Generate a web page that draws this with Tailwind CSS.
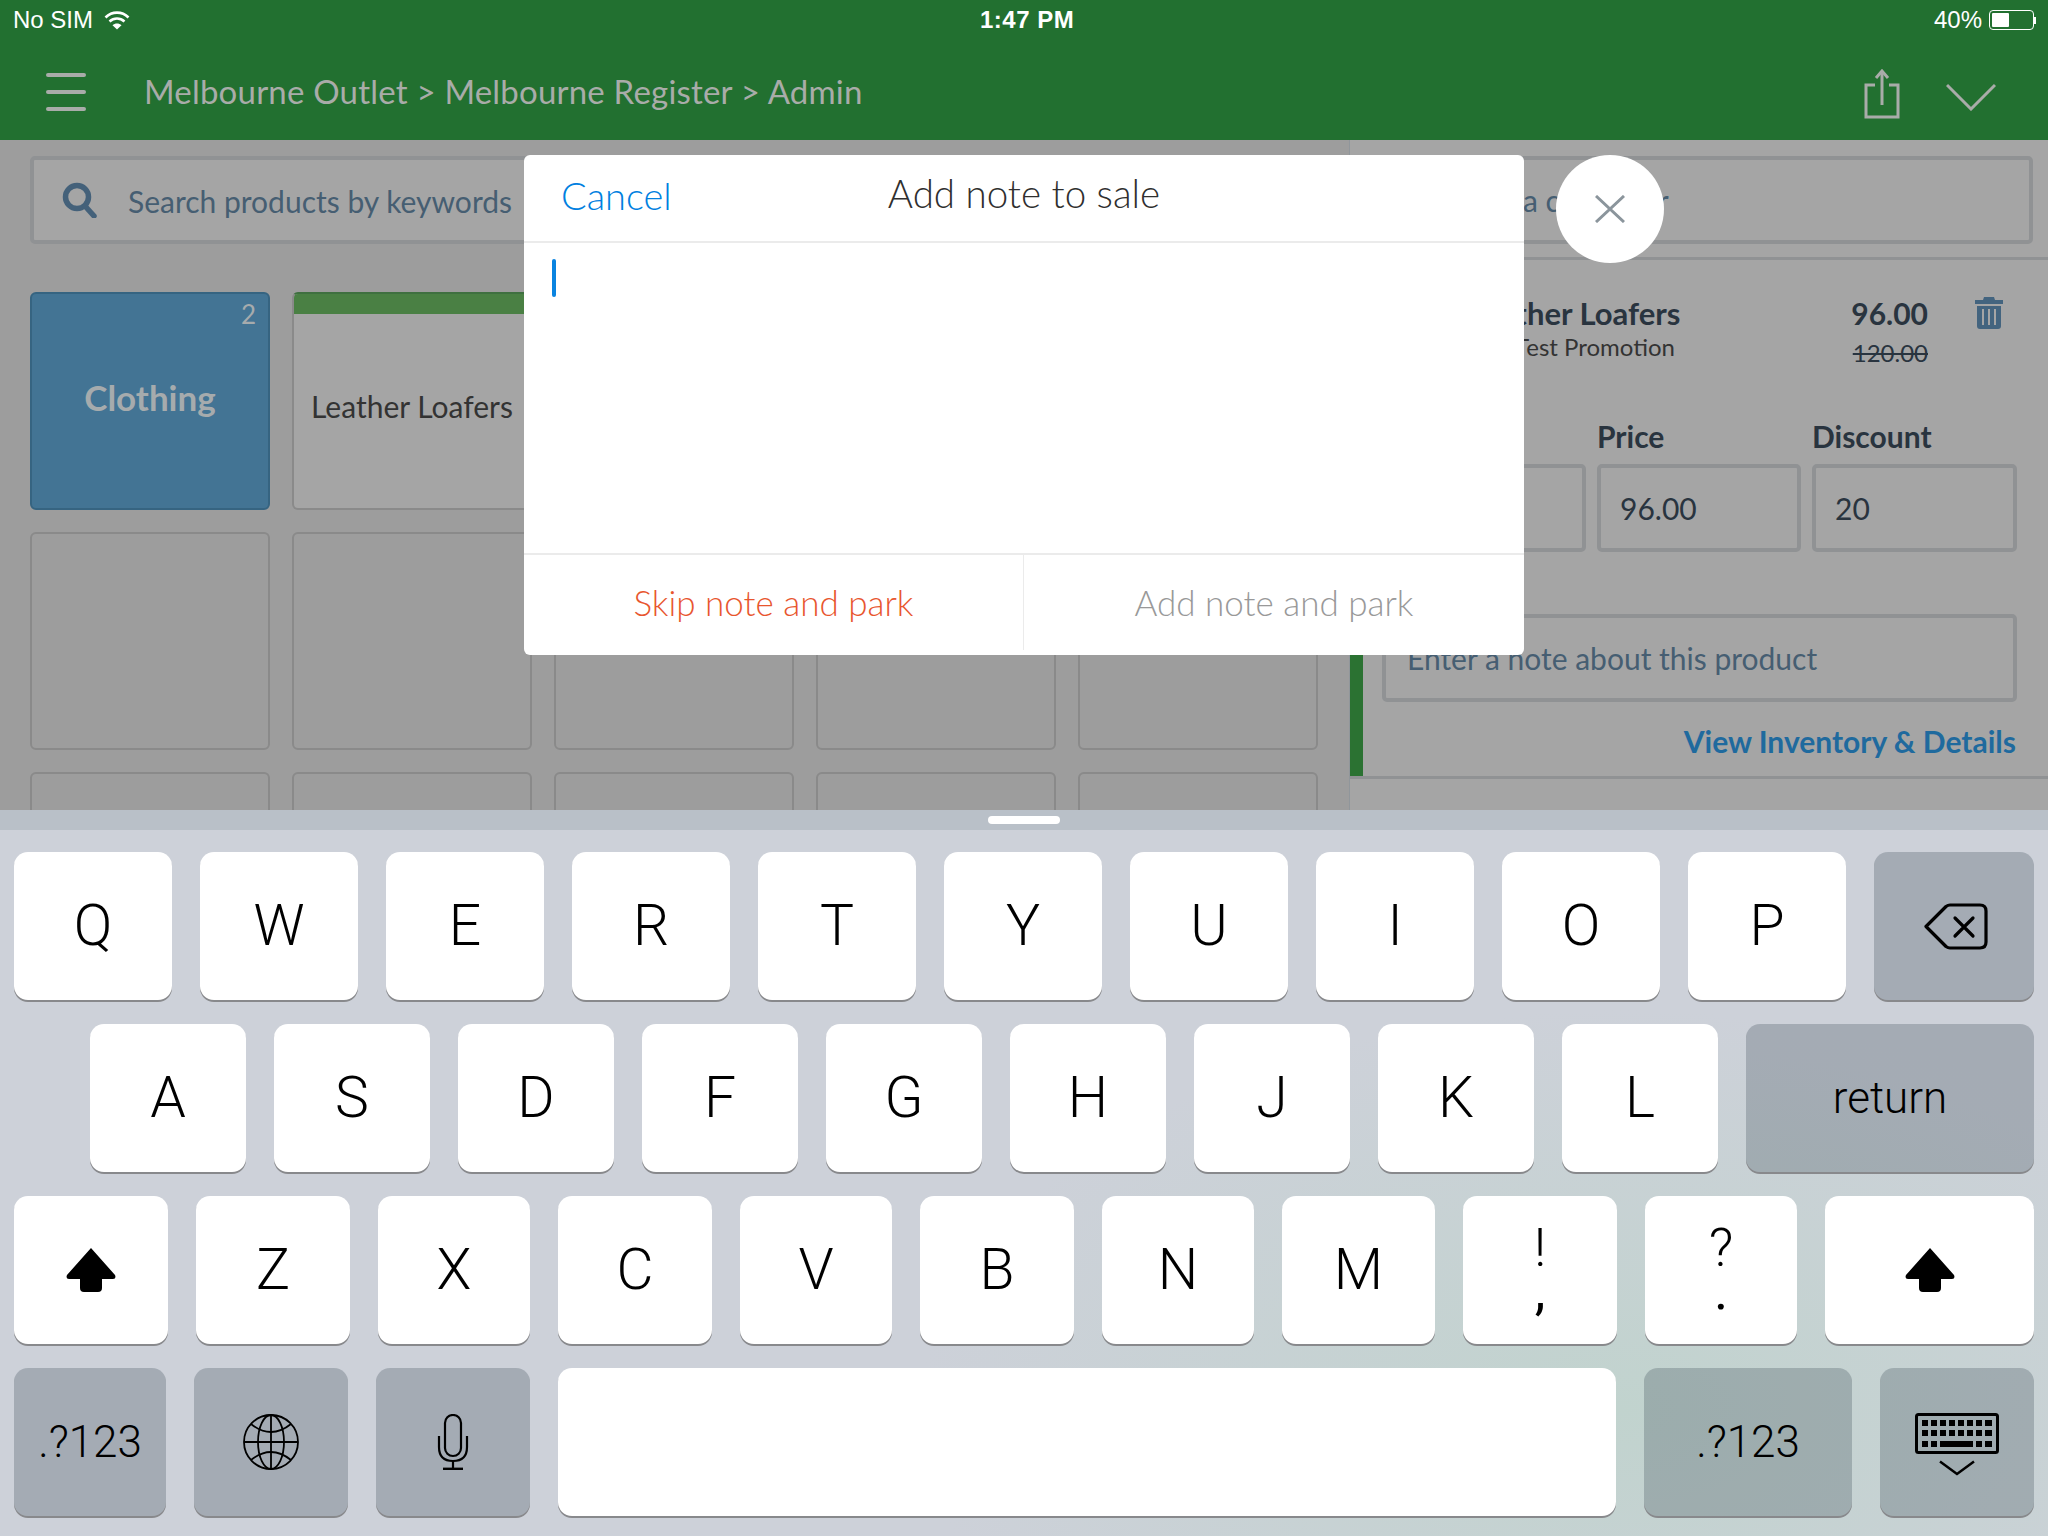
<!DOCTYPE html>
<html lang="en">
  <head>
    <meta charset="UTF-8" />
    <title>Add note to sale</title>
    <script src="https://cdn.jsdelivr.net/npm/@tailwindcss/browser@4"></script>
  </head>
  <body class="relative w-[2048px] h-[1536px] overflow-hidden bg-white font-[Lato,sans-serif]">
    <!-- green header with the ios status bar -->
    <header class="h-[140px] bg-[#227030]">
      <div class="relative flex h-[40px] items-center justify-between pl-[13px] pr-[12px] text-[24px] text-white font-['Liberation_Sans',sans-serif]">
        <div class="flex items-center gap-[11px]">
          <span>No SIM</span>
          <svg width="26" height="20" viewBox="0 0 26 20" fill="none" stroke="#fff" stroke-width="2.6">
            <path d="M1.5 7.5C8 1 18 1 24.5 7.5" />
            <path d="M5.5 11.5C10 7.5 16 7.5 20.5 11.5" />
            <path d="M13 19.5L8.5 15.2C11 12.8 15 12.8 17.5 15.2Z" fill="#fff" stroke="none" />
          </svg>
        </div>
        <span class="absolute left-[980px] font-bold tracking-[0.5px]">1:47 PM</span>
        <div class="flex items-center gap-[7px]">
          <span>40%</span>
          <div class="flex items-center">
            <div class="w-[45px] h-[20px] rounded-[4px] border border-white p-[2px]">
              <div class="w-[17px] h-full bg-white rounded-[1px]"></div>
            </div>
            <div class="w-[2px] h-[7px] bg-white"></div>
          </div>
        </div>
      </div>
      <div class="flex h-[100px] items-center pt-[4px] pl-[46px] pr-[52px] text-[#a9aca9]">
        <div class="flex w-[40px] flex-col gap-[13px]">
          <div class="h-[4px] rounded-full bg-[#a9aca9]"></div>
          <div class="h-[4px] rounded-full bg-[#a9aca9]"></div>
          <div class="h-[4px] rounded-full bg-[#a9aca9]"></div>
        </div>
        <div class="ml-[58px] text-[33px] tracking-[0.2px]">Melbourne Outlet &gt; Melbourne Register &gt; Admin</div>
        <svg class="ml-auto mt-[3px]" width="36" height="50" viewBox="0 0 36 50" fill="none" stroke="#a9aca9" stroke-width="3">
          <path d="M11 16H2V48H34V16H25" />
          <path d="M18 36V3" />
          <path d="M12 9L18 2L24 9" />
        </svg>
        <svg class="ml-[46px] mt-[10px]" width="50" height="28" viewBox="0 0 50 28" fill="none" stroke="#a9aca9" stroke-width="3">
          <path d="M1 2L25 26L49 2" />
        </svg>
      </div>
    </header>

    <main class="flex h-[670px]">
      <!-- product side, dimmed -->
      <section class="w-[1349px] shrink-0 overflow-hidden bg-[#9d9d9d] pl-[30px] pr-[31px] pt-[16px]">
        <div class="flex h-[88px] items-center rounded-[5px] border-4 border-[#909294] bg-[#a5a5a5] pl-[28px]">
          <svg width="36" height="36" viewBox="0 0 36 36" fill="none" stroke="#44617a" stroke-width="5.5">
            <circle cx="15" cy="15" r="11.5" />
            <path d="M23 24L32 34" stroke-linecap="round" />
          </svg>
          <span class="ml-[30px] mt-[2px] text-[30px] text-[#465e72]">Search products by keywords</span>
        </div>
        <div class="mt-[48px] grid grid-cols-[repeat(5,240px)] auto-rows-[218px] gap-x-[22px] gap-y-[22px]">
          <div class="relative flex items-center justify-center rounded-[6px] border-2 border-[#366481] bg-[#437494] pb-[8px] text-[35px] font-bold text-[#a6abad]">
            <span class="absolute right-[12px] top-[1px] text-[26px] font-normal">2</span>
            Clothing
          </div>
          <div class="flex flex-col overflow-hidden rounded-[6px] border-2 border-[#8a8a8a] border-t-[#3f7040] bg-[#a5a5a5]">
            <div class="h-[20px] bg-[#4a8044]"></div>
            <div class="flex flex-1 items-center justify-center pb-[9px] text-[30px] text-[#333]">Leather Loafers</div>
          </div>
          <div class="rounded-[6px] border-2 border-[#8a8a8a]"></div>
          <div class="rounded-[6px] border-2 border-[#8a8a8a]"></div>
          <div class="rounded-[6px] border-2 border-[#8a8a8a]"></div>
          <div class="rounded-[6px] border-2 border-[#8a8a8a]"></div>
          <div class="rounded-[6px] border-2 border-[#8a8a8a]"></div>
          <div class="rounded-[6px] border-2 border-[#8a8a8a]"></div>
          <div class="rounded-[6px] border-2 border-[#8a8a8a]"></div>
          <div class="rounded-[6px] border-2 border-[#8a8a8a]"></div>
          <div class="rounded-[6px] border-2 border-[#8a8a8a]"></div>
          <div class="rounded-[6px] border-2 border-[#8a8a8a]"></div>
          <div class="rounded-[6px] border-2 border-[#8a8a8a]"></div>
          <div class="rounded-[6px] border-2 border-[#8a8a8a]"></div>
          <div class="rounded-[6px] border-2 border-[#8a8a8a]"></div>
        </div>
      </section>

      <!-- sale side, dimmed -->
      <section class="flex flex-1 flex-col border-l border-[#90969b] bg-[#a5a5a5]">
        <div class="h-[120px] border-b-[3px] border-[#909294] px-[16px] pt-[16px]">
          <div class="flex h-[88px] items-center rounded-[5px] border-4 border-[#909294] pl-[12px] text-[30px] text-[#465e72]">Search for a customer</div>
        </div>
        <div class="h-[519px] border-b-[3px] border-[#909294]">
          <div class="h-[516px] border-l-[13px] border-[#2b7232] pl-[19px] pr-[32px]">
            <div class="flex pt-[35px] text-[#29343f]">
              <div class="w-[86px] shrink-0"></div>
              <div class="w-[232px]">
                <div class="text-[31px] font-bold leading-[36px]">Leather Loafers</div>
                <div class="ml-[47px] whitespace-nowrap text-[24px] leading-[32px] text-[#333]">Test Promotion</div>
              </div>
              <div class="ml-auto w-[120px] text-right">
                <div class="text-[30px] font-bold leading-[36px]">96.00</div>
                <div class="mt-[6px] text-[24px] leading-[32px] line-through">120.00</div>
              </div>
              <svg class="ml-[46px] mr-[13px] mt-[2px]" width="30" height="32" viewBox="0 0 30 32" fill="#43647f">
                <path d="M10 0H20L21 3H29V7H1V3H9Z" />
                <path d="M3 9H27V29Q27 32 24 32H6Q3 32 3 29ZM8 12V28H10V12ZM14 12V28H16V12ZM20 12V28H22V12Z" fill-rule="evenodd" />
              </svg>
            </div>
            <div class="mt-[47px] flex gap-[11px] text-[#29343f]">
              <div class="w-[204px] shrink-0">
                <div class="h-[40px] text-[30px] font-bold leading-[40px]">Quantity</div>
                <div class="mt-[8px] h-[88px] rounded-[5px] border-4 border-[#909294]"></div>
              </div>
              <div class="w-[204px] shrink-0">
                <div class="h-[40px] text-[30px] font-bold leading-[40px]">Price</div>
                <div class="mt-[8px] flex h-[88px] items-center rounded-[5px] border-4 border-[#909294] pl-[19px] text-[30px]">96.00</div>
              </div>
              <div class="w-[205px] shrink-0">
                <div class="h-[40px] text-[30px] font-bold leading-[40px]">Discount</div>
                <div class="mt-[8px] flex h-[88px] items-center rounded-[5px] border-4 border-[#909294] pl-[19px] text-[30px]">20</div>
              </div>
            </div>
            <div class="mt-[62px] flex h-[88px] items-center rounded-[5px] border-4 border-[#909294] pl-[21px] text-[30px] text-[#465e72]">Enter a note about this product</div>
            <div class="mt-[19px] pr-[1px] text-right text-[30px] font-bold leading-[40px] text-[#1f6a9e]">View Inventory &amp; Details</div>
          </div>
        </div>
      </section>
    </main>

    <!-- keyboard -->
    <div class="relative h-[726px] font-[Roboto,sans-serif] text-black">
      <div class="flex h-[20px] items-center justify-center bg-[#b9c0c8]">
        <div class="h-[8px] w-[72px] rounded-full bg-white"></div>
      </div>
      <div class="flex h-[706px] flex-col gap-[24px] bg-[#cdd0d9] bg-[radial-gradient(ellipse_700px_400px_at_1620px_580px,#c1d3ce,#cdd1d9)] pt-[22px] text-[57px] font-light">
        <div class="flex h-[148px] gap-[28px] pl-[14px]">
          <div class="flex w-[158px] items-center justify-center rounded-[14px] bg-white shadow-[0_2px_0_#88898c]">Q</div>
          <div class="flex w-[158px] items-center justify-center rounded-[14px] bg-white shadow-[0_2px_0_#88898c]">W</div>
          <div class="flex w-[158px] items-center justify-center rounded-[14px] bg-white shadow-[0_2px_0_#88898c]">E</div>
          <div class="flex w-[158px] items-center justify-center rounded-[14px] bg-white shadow-[0_2px_0_#88898c]">R</div>
          <div class="flex w-[158px] items-center justify-center rounded-[14px] bg-white shadow-[0_2px_0_#88898c]">T</div>
          <div class="flex w-[158px] items-center justify-center rounded-[14px] bg-white shadow-[0_2px_0_#88898c]">Y</div>
          <div class="flex w-[158px] items-center justify-center rounded-[14px] bg-white shadow-[0_2px_0_#88898c]">U</div>
          <div class="flex w-[158px] items-center justify-center rounded-[14px] bg-white shadow-[0_2px_0_#88898c]">I</div>
          <div class="flex w-[158px] items-center justify-center rounded-[14px] bg-white shadow-[0_2px_0_#88898c]">O</div>
          <div class="flex w-[158px] items-center justify-center rounded-[14px] bg-white shadow-[0_2px_0_#88898c]">P</div>
          <div class="flex w-[160px] items-center justify-center rounded-[14px] bg-[#2d3c49]/25 shadow-[0_2px_0_#88898c]">
            <svg class="ml-[4px]" width="64" height="47" viewBox="0 0 64 47" fill="none" stroke="#000" stroke-width="3.2" stroke-linejoin="round" stroke-linecap="round">
              <path d="M2 23.5L22 3.5Q24 2 26 2H56Q62 2 62 8V39Q62 45 56 45H26Q24 45 22 43.5Z" />
              <path d="M31 15L49 33M49 15L31 33" />
            </svg>
          </div>
        </div>
        <div class="flex h-[148px] gap-[28px] pl-[90px]">
          <div class="flex w-[156px] items-center justify-center rounded-[14px] bg-white shadow-[0_2px_0_#88898c]">A</div>
          <div class="flex w-[156px] items-center justify-center rounded-[14px] bg-white shadow-[0_2px_0_#88898c]">S</div>
          <div class="flex w-[156px] items-center justify-center rounded-[14px] bg-white shadow-[0_2px_0_#88898c]">D</div>
          <div class="flex w-[156px] items-center justify-center rounded-[14px] bg-white shadow-[0_2px_0_#88898c]">F</div>
          <div class="flex w-[156px] items-center justify-center rounded-[14px] bg-white shadow-[0_2px_0_#88898c]">G</div>
          <div class="flex w-[156px] items-center justify-center rounded-[14px] bg-white shadow-[0_2px_0_#88898c]">H</div>
          <div class="flex w-[156px] items-center justify-center rounded-[14px] bg-white shadow-[0_2px_0_#88898c]">J</div>
          <div class="flex w-[156px] items-center justify-center rounded-[14px] bg-white shadow-[0_2px_0_#88898c]">K</div>
          <div class="flex w-[156px] items-center justify-center rounded-[14px] bg-white shadow-[0_2px_0_#88898c]">L</div>
          <div class="flex w-[288px] items-center justify-center rounded-[14px] bg-[#2d3c49]/25 text-[44px] shadow-[0_2px_0_#88898c]">return</div>
        </div>
        <div class="flex h-[148px] gap-[28px] pl-[14px]">
          <div class="flex w-[154px] items-center justify-center rounded-[14px] bg-white shadow-[0_2px_0_#88898c]">
            <svg width="50" height="44" viewBox="0 0 50 44" fill="#000">
              <path d="M25 0L49 27Q50.500 31 47 31H36V40Q36 44 32 44H18Q14 44 14 40V31H3Q-.5 31 1 27Z" />
            </svg>
          </div>
          <div class="flex w-[154px] items-center justify-center rounded-[14px] bg-white shadow-[0_2px_0_#88898c]">Z</div>
          <div class="flex w-[152px] items-center justify-center rounded-[14px] bg-white shadow-[0_2px_0_#88898c]">X</div>
          <div class="flex w-[154px] items-center justify-center rounded-[14px] bg-white shadow-[0_2px_0_#88898c]">C</div>
          <div class="flex w-[152px] items-center justify-center rounded-[14px] bg-white shadow-[0_2px_0_#88898c]">V</div>
          <div class="flex w-[154px] items-center justify-center rounded-[14px] bg-white shadow-[0_2px_0_#88898c]">B</div>
          <div class="flex w-[152px] items-center justify-center rounded-[14px] bg-white shadow-[0_2px_0_#88898c]">N</div>
          <div class="flex w-[153px] items-center justify-center rounded-[14px] bg-white shadow-[0_2px_0_#88898c]">M</div>
          <div class="flex w-[154px] flex-col items-center justify-center rounded-[14px] bg-white pb-[2px] text-[54px] leading-[43px] shadow-[0_2px_0_#88898c]"><span>!</span><span class="font-normal">,</span></div>
          <div class="flex w-[152px] flex-col items-center justify-center rounded-[14px] bg-white pb-[2px] text-[54px] leading-[43px] shadow-[0_2px_0_#88898c]"><span>?</span><span class="font-normal">.</span></div>
          <div class="flex w-[209px] items-center justify-center rounded-[14px] bg-white shadow-[0_2px_0_#88898c]">
            <svg width="50" height="44" viewBox="0 0 50 44" fill="#000">
              <path d="M25 0L49 27Q50.500 31 47 31H36V40Q36 44 32 44H18Q14 44 14 40V31H3Q-.5 31 1 27Z" />
            </svg>
          </div>
        </div>
        <div class="flex h-[148px] gap-[28px] pl-[14px] text-[44px]">
          <div class="flex w-[152px] items-center justify-center rounded-[14px] bg-[#2d3c49]/25 shadow-[0_2px_0_#88898c]">.?123</div>
          <div class="flex w-[154px] items-center justify-center rounded-[14px] bg-[#2d3c49]/25 shadow-[0_2px_0_#88898c]">
            <svg width="56" height="56" viewBox="0 0 56 56" fill="none" stroke="#000" stroke-width="1.800">
              <circle cx="28" cy="28" r="27" />
              <ellipse cx="28" cy="28" rx="13" ry="27" />
              <path d="M28 1V55M1 28H55" />
              <path d="M8 10Q28 26 48 10M8 46Q28 30 48 46" />
            </svg>
          </div>
          <div class="flex w-[154px] items-center justify-center rounded-[14px] bg-[#2d3c49]/25 shadow-[0_2px_0_#88898c]">
            <svg width="32" height="56" viewBox="0 0 32 56" fill="none" stroke="#000" stroke-width="2.200">
              <rect x="8" y="1" width="16" height="41" rx="8" />
              <path d="M2 22V33Q2 47 16 47Q30 47 30 33V22" />
              <path d="M16 47V55" />
              <path d="M6 55H26" stroke-width="2.800" />
            </svg>
          </div>
          <div class="w-[1058px] rounded-[14px] bg-white shadow-[0_2px_0_#88898c]"></div>
          <div class="flex w-[208px] items-center justify-center rounded-[14px] bg-[#2d3c49]/25 shadow-[0_2px_0_#88898c]">.?123</div>
          <div class="flex w-[154px] flex-col items-center justify-center gap-[6px] rounded-[14px] bg-[#2d3c49]/25 pt-[4px] shadow-[0_2px_0_#88898c]">
            <svg width="84" height="41" viewBox="0 0 84 41" fill="#000">
              <rect x="1.500" y="1.500" width="81" height="38" rx="2" fill="none" stroke="#000" stroke-width="3" />
              <path d="M7 7h6v6H7zM16 7h6v6h-6zM25 7h6v6h-6zM34 7h6v6h-6zM43 7h6v6h-6zM52 7h6v6h-6zM61 7h6v6h-6zM70 7h7v6h-7z" />
              <path d="M7 17h6v6H7zM16 17h6v6h-6zM25 17h6v6h-6zM34 17h6v6h-6zM43 17h6v6h-6zM52 17h6v6h-6zM61 17h6v6h-6zM70 17h7v6h-7z" />
              <path d="M7 28h6v6H7zM16 28h6v6h-6zM25 28h33v6H25zM61 28h6v6h-6zM70 28h7v6h-7z" />
            </svg>
            <svg width="36" height="16" viewBox="0 0 36 16" fill="none" stroke="#000" stroke-width="2.500">
              <path d="M1 1.500L18 14L35 1.500" />
            </svg>
          </div>
        </div>
      </div>
    </div>

    <!-- note dialog -->
    <div class="absolute left-[524px] top-[155px] flex h-[500px] w-[1000px] flex-col rounded-[6px] bg-white font-light">
      <div class="relative flex h-[88px] items-center justify-center border-b-[2px] border-[#ebebeb] pb-[8px] text-[38.500px] text-[#2f2f2f]">
        <span class="absolute left-[37px] top-[12px] text-[38px] text-[#0080e0]">Cancel</span>
        Add note to sale
      </div>
      <div class="h-[310px] pl-[28px] pt-[16px]">
        <div class="h-[38px] w-[4px] rounded-full bg-[#0a84e0]"></div>
      </div>
      <div class="flex flex-1 border-t-[2px] border-[#ebebeb] pb-[5px] text-[35px]">
        <div class="flex w-[500px] items-center justify-center border-r-[1px] border-[#ebebeb] text-[#e8562e]">Skip note and park</div>
        <div class="flex flex-1 items-center justify-center text-[#999]">Add note and park</div>
      </div>
    </div>

    <div class="absolute left-[1556px] top-[155px] flex h-[108px] w-[108px] items-center justify-center rounded-full bg-white">
      <svg width="30" height="28" viewBox="0 0 30 28" fill="none" stroke="#8b959c" stroke-width="3">
        <path d="M1 1L29 27M29 1L1 27" />
      </svg>
    </div>
  </body>
</html>
